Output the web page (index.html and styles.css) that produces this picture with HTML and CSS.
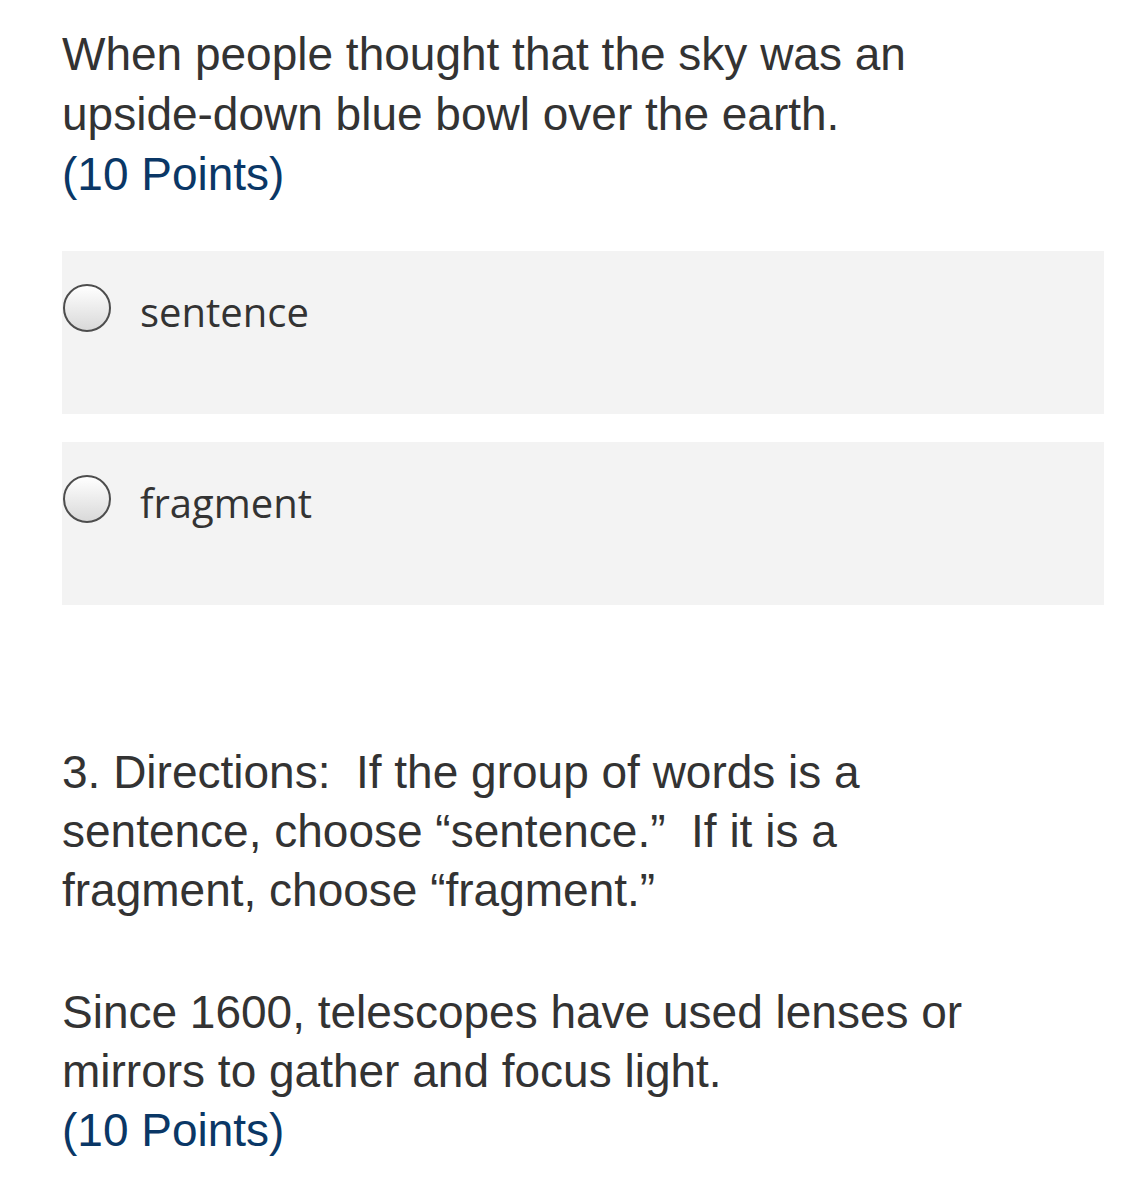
FILE: index.html
```html
<!DOCTYPE html>
<html>
<head>
<meta charset="utf-8">
<link rel="stylesheet" href="styles.css">
</head>
<body>
<div class="page">
  <div class="question">
    <p class="text">When people thought that the sky was an upside&#8209;down blue bowl over the earth.</p>
    <p class="points">(10 Points)</p>
  </div>
  <div class="options">
    <div class="option">
      <div class="row">
        <span class="radio"></span>
        <span class="label">sentence</span>
      </div>
    </div>
    <div class="option">
      <div class="row">
        <span class="radio"></span>
        <span class="label">fragment</span>
      </div>
    </div>
  </div>
  <div class="question q3">
    <p class="text">3. Directions:&nbsp; If the group of words is a sentence, choose “sentence.”&nbsp; If it is a fragment, choose “fragment.”</p>
    <p class="text prompt">Since 1600, telescopes have used lenses or mirrors to gather and focus light.</p>
    <p class="points">(10 Points)</p>
  </div>
</div>
</body>
</html>
```

FILE: styles.css
```css
html, body {
  margin: 0;
  padding: 0;
  background: #ffffff;
}

.page {
  padding: 24px 22px 40px 62px;
}

.question {
  max-width: 925px;
  font-family: "Liberation Sans", Arial, sans-serif;
  font-size: 46px;
  line-height: 60px;
  color: #333333;
}

.question p {
  margin: 0;
}

.points {
  color: #0a3766;
}

.options {
  display: flex;
  flex-direction: column;
  gap: 28px;
  margin-top: 47px;
}

.option {
  background: #f3f3f3;
  height: 163px;
  box-sizing: border-box;
  padding-top: 33px;
}

.row {
  display: flex;
  align-items: center;
  gap: 29px;
}

.radio {
  width: 44px;
  height: 44px;
  margin-left: 1px;
  border: 2px solid #4d4d4d;
  border-radius: 50%;
  background: linear-gradient(#ffffff, #d9d9d9);
  flex: none;
}

.label {
  font-family: "Open Sans", "Noto Sans", sans-serif;
  font-size: 40px;
  line-height: 48px;
  color: #333333;
  position: relative;
  top: 4px;
}

.q3 {
  margin-top: 138px;
  line-height: 59px;
}

.question p.prompt {
  margin-top: 63px;
}
```
